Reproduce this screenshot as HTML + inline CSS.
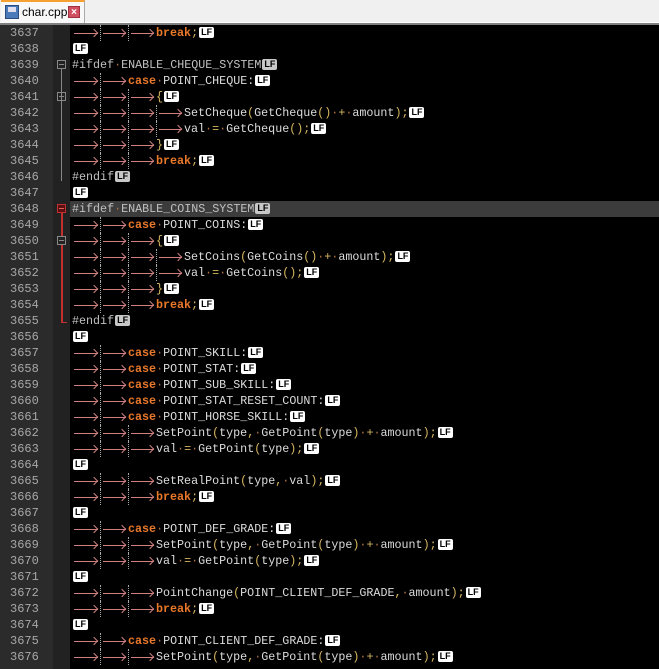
<!DOCTYPE html>
<html><head><style>
html,body{margin:0;width:659px;height:669px;overflow:hidden}
body{position:relative;background:#000;font-family:"Liberation Mono",monospace;font-size:11.7px}
#tb{position:absolute;left:0;top:0;width:659px;height:22px;background:#f0f0f0;border-bottom:1px solid #fff}
#tb2{position:absolute;left:0;top:23px;width:659px;height:2px;background:#808080}
#tab{position:absolute;left:1px;top:0;width:84px;height:23px;background:#f8f8f8;border-top:2px solid #f5a030;border-right:1px solid #aaa;box-sizing:border-box;font-family:"Liberation Sans",sans-serif;font-size:12px;color:#000}
#tab .ic{position:absolute;left:4px;top:3px;width:14px;height:14px;background:#4a7ab8;border:1px solid #2a4a80;box-sizing:border-box}
#tab .ic:after{content:"";position:absolute;left:2px;top:1px;width:8px;height:5px;background:#dde}
#tab .nm{position:absolute;left:21px;top:3px}
#tab .x{position:absolute;left:67px;top:4px;width:12px;height:12px;background:#d05060;color:#fff;font-size:10px;line-height:12px;text-align:center;font-weight:bold;border:1px solid #a03040;box-sizing:border-box}
#ln{position:absolute;left:0;top:25px;width:53px;height:644px;background:#2b2b2b}
#fm{position:absolute;left:53px;top:25px;width:17px;height:644px;background:#222}
.n{position:absolute;left:10px;color:#a8a8a8;height:16px;line-height:16px;font-size:12px}
.r{position:absolute;left:72px;height:16px;line-height:16px;white-space:pre;color:#dcdcdc}
.hl{position:absolute;left:70px;width:589px;height:16px;background:#3c3c3c}
.t{display:inline-block;width:28px;height:16px;vertical-align:top;position:relative;box-sizing:border-box}
.t:before{content:"";position:absolute;left:2px;right:2px;top:8px;height:1px;background:#d08080}
.t:after{content:"";position:absolute;top:5px;width:5px;height:5px;border-top:1px solid #d08080;border-right:1px solid #d08080;transform:rotate(45deg);right:3px}
.t+.t{border-left:1px dotted #aaa}
.k{color:#e8782a;font-weight:bold}
.o{color:#d8b860}
.d{color:#b07040}
.p{color:#c0c0c0}
.L{display:inline-block;background:#fff;color:#000;font-size:9px;font-weight:bold;line-height:11px;height:11px;padding:0 2px;border-radius:2px;vertical-align:1px;margin-left:1px;font-family:"Liberation Sans",sans-serif}
.Lg{background:#c8c8c8}
.fb{position:absolute;left:57px;width:9px;height:9px;border:1px solid #888;box-sizing:border-box}
.fb:after{content:"";position:absolute;left:1px;right:1px;top:3px;height:1px;background:#888}
.fr{border-color:#c03030;background:#5a1010}
.fr:after{background:#e06060}
.vl{position:absolute;left:61px;width:1px;background:#888}
</style></head><body>
<div id="tb"><div id="tab"><div class="ic"></div><span class="nm">char.cpp</span><div class="x">×</div></div></div>
<div id="tb2"></div>
<div id="ln"></div><div id="fm"></div>
<div class="hl" style="top:201px"></div>
<div class="fb" style="top:60px"></div>
<div class="vl" style="top:69px;height:112px"></div>
<div class="fb" style="top:92px"></div>
<div class="fb fr" style="top:204px"></div>
<div class="vl" style="top:213px;height:110px;background:#c03030;width:2px"></div>
<div class="fb" style="top:236px;background:#222"></div>
<div class="vl" style="top:322px;height:1px;width:6px;background:#c03030"></div>
<div id="c"></div>
<script>
const T='<span class="t"></span>';
const t=n=>T.repeat(n);
const D='<span class="d">·</span>';
const L='<span class="L">LF</span>',LG='<span class="L Lg">LF</span>';
const k=s=>'<span class="k">'+s+'</span>';
const o=s=>'<span class="o">'+s+'</span>';
const lines=[
t(3)+k('break')+o(';')+L,
L,
'<span class="p">#ifdef'+D+'ENABLE_CHEQUE_SYSTEM</span>'+LG,
t(2)+k('case')+D+'POINT_CHEQUE:'+L,
t(3)+o('{')+L,
t(4)+'SetCheque'+o('(')+'GetCheque'+o('()')+D+o('+')+D+'amount'+o(');')+L,
t(4)+'val'+D+o('=')+D+'GetCheque'+o('();')+L,
t(3)+o('}')+L,
t(3)+k('break')+o(';')+L,
'<span class="p">#endif</span>'+LG,
L,
'<span class="p">#ifdef'+D+'ENABLE_COINS_SYSTEM</span>'+LG,
t(2)+k('case')+D+'POINT_COINS:'+L,
t(3)+o('{')+L,
t(4)+'SetCoins'+o('(')+'GetCoins'+o('()')+D+o('+')+D+'amount'+o(');')+L,
t(4)+'val'+D+o('=')+D+'GetCoins'+o('();')+L,
t(3)+o('}')+L,
t(3)+k('break')+o(';')+L,
'<span class="p">#endif</span>'+LG,
L,
t(2)+k('case')+D+'POINT_SKILL:'+L,
t(2)+k('case')+D+'POINT_STAT:'+L,
t(2)+k('case')+D+'POINT_SUB_SKILL:'+L,
t(2)+k('case')+D+'POINT_STAT_RESET_COUNT:'+L,
t(2)+k('case')+D+'POINT_HORSE_SKILL:'+L,
t(3)+'SetPoint'+o('(')+'type'+o(',')+D+'GetPoint'+o('(')+'type'+o(')')+D+o('+')+D+'amount'+o(');')+L,
t(3)+'val'+D+o('=')+D+'GetPoint'+o('(')+'type'+o(');')+L,
L,
t(3)+'SetRealPoint'+o('(')+'type'+o(',')+D+'val'+o(');')+L,
t(3)+k('break')+o(';')+L,
L,
t(2)+k('case')+D+'POINT_DEF_GRADE:'+L,
t(3)+'SetPoint'+o('(')+'type'+o(',')+D+'GetPoint'+o('(')+'type'+o(')')+D+o('+')+D+'amount'+o(');')+L,
t(3)+'val'+D+o('=')+D+'GetPoint'+o('(')+'type'+o(');')+L,
L,
t(3)+'PointChange'+o('(')+'POINT_CLIENT_DEF_GRADE'+o(',')+D+'amount'+o(');')+L,
t(3)+k('break')+o(';')+L,
L,
t(2)+k('case')+D+'POINT_CLIENT_DEF_GRADE:'+L,
t(3)+'SetPoint'+o('(')+'type'+o(',')+D+'GetPoint'+o('(')+'type'+o(')')+D+o('+')+D+'amount'+o(');')+L
];
let h='';
lines.forEach((s,i)=>{const y=25+i*16;h+='<div class="n" style="top:'+y+'px">'+(3637+i)+'</div><div class="r" style="top:'+y+'px">'+s+'</div>';});
document.getElementById('c').innerHTML=h;
</script>
</body></html>
